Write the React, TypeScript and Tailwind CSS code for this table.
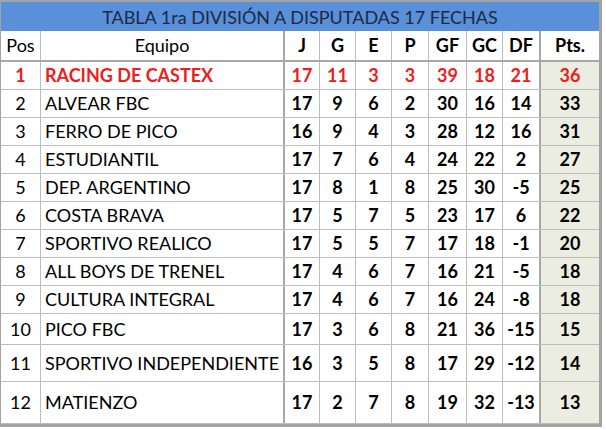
import React from "react";

type Row = { pos: number; team: string; v: (number | string)[]; h: string };

const rows: Row[] = [
  { pos: 1, team: "RACING DE CASTEX", v: [17, 11, 3, 3, 39, 18, 21, 36], h: "h-[28px]" },
  { pos: 2, team: "ALVEAR FBC", v: [17, 9, 6, 2, 30, 16, 14, 33], h: "h-[28px]" },
  { pos: 3, team: "FERRO DE PICO", v: [16, 9, 4, 3, 28, 12, 16, 31], h: "h-[28px]" },
  { pos: 4, team: "ESTUDIANTIL", v: [17, 7, 6, 4, 24, 22, 2, 27], h: "h-[28px]" },
  { pos: 5, team: "DEP. ARGENTINO", v: [17, 8, 1, 8, 25, 30, -5, 25], h: "h-[28px]" },
  { pos: 6, team: "COSTA BRAVA", v: [17, 5, 7, 5, 23, 17, 6, 22], h: "h-[28px]" },
  { pos: 7, team: "SPORTIVO REALICO", v: [17, 5, 5, 7, 17, 18, -1, 20], h: "h-[28px]" },
  { pos: 8, team: "ALL BOYS DE TRENEL", v: [17, 4, 6, 7, 16, 21, -5, 18], h: "h-[28px]" },
  { pos: 9, team: "CULTURA INTEGRAL", v: [17, 4, 6, 7, 16, 24, -8, 18], h: "h-[28px]" },
  { pos: 10, team: "PICO FBC", v: [17, 3, 6, 8, 21, 36, -15, 15], h: "h-[31px]" },
  { pos: 11, team: "SPORTIVO INDEPENDIENTE", v: [16, 3, 5, 8, 17, 29, -12, 14], h: "h-[37px]" },
  { pos: 12, team: "MATIENZO", v: [17, 2, 7, 8, 19, 32, -13, 13], h: "h-[42px]" },
];

const numCols = [
  { label: "J", w: "w-[35px]" },
  { label: "G", w: "w-[36px]" },
  { label: "E", w: "w-[36px]" },
  { label: "P", w: "w-[37px]" },
  { label: "GF", w: "w-[38px]" },
  { label: "GC", w: "w-[36px]" },
];

export default function App() {
  return (
    <div className="w-[606px] h-[430px] bg-white" style={{ fontFamily: "Lato, 'Noto Sans', sans-serif" }}>
      <div className="border-l border-t-2 border-r-[3px] border-b-[3px] border-[#a3a3a3] box-content w-[598px]">
        <div className="h-[29px] bg-[#5a8fd9] text-[#1b2a47] text-[18px] flex items-center justify-center leading-none">
          TABLA 1ra DIVISIÓN A DISPUTADAS 17 FECHAS
        </div>
        <div className="flex h-[31px] border-b-2 border-[#a8a8a8] text-[18px] text-black">
          <div className="w-[40px] border-r border-[#bdbdbd] flex items-center justify-center">Pos</div>
          <div className="w-[244px] border-r-2 border-[#a8a8a8] flex items-center justify-center">Equipo</div>
          {numCols.map((c) => (
            <div key={c.label} className={`${c.w} border-r border-[#bdbdbd] flex items-center justify-center font-bold`}>
              {c.label}
            </div>
          ))}
          <div className="w-[38px] border-r-2 border-[#a8a8a8] flex items-center justify-center font-bold">DF</div>
          <div className="w-[58px] flex items-center justify-center font-bold">Pts.</div>
        </div>
        {rows.map((r) => {
          const red = r.pos === 1;
          const color = red ? "text-[#ee1c1c]" : "text-black";
          return (
            <div key={r.pos} className={`flex ${r.h} border-b border-[#bdbdbd] text-[18px] ${color}`}>
              <div className={`w-[40px] border-r border-[#bdbdbd] flex items-center justify-center ${red ? "font-bold" : ""}`}>
                {r.pos}
              </div>
              <div
                className={`w-[244px] border-r-2 border-[#a8a8a8] flex items-center pl-[4px] whitespace-nowrap ${
                  red ? "font-bold" : ""
                }`}
              >
                {r.team}
              </div>
              {numCols.map((c, i) => (
                <div key={c.label} className={`${c.w} border-r border-[#bdbdbd] flex items-center justify-center font-bold`}>
                  {r.v[i]}
                </div>
              ))}
              <div className="w-[38px] border-r-2 border-[#a8a8a8] flex items-center justify-center font-bold">{r.v[6]}</div>
              <div className="w-[58px] bg-[#ebede0] flex items-center justify-center font-bold">{r.v[7]}</div>
            </div>
          );
        })}
      </div>
    </div>
  );
}
